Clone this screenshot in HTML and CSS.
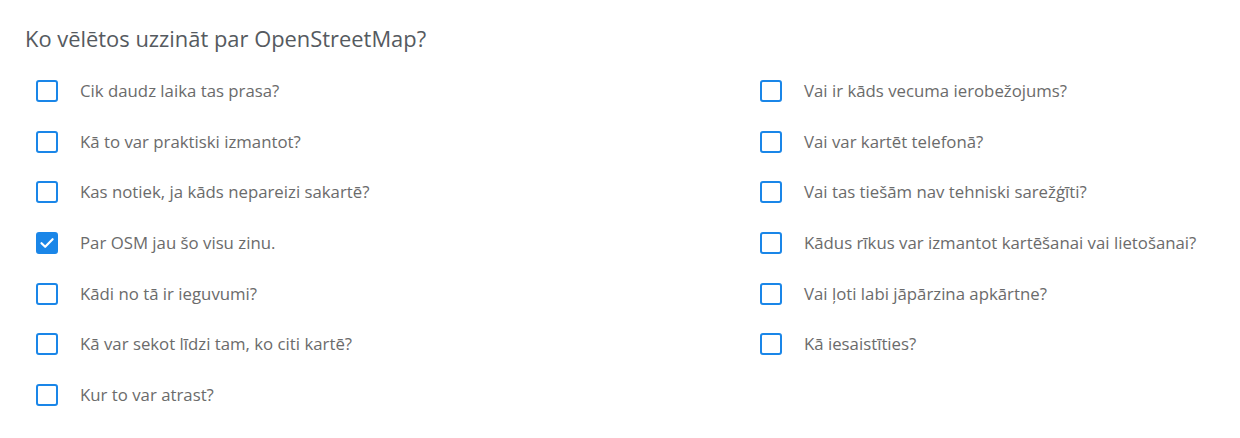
FILE: index.html
```html
<!DOCTYPE html>
<html lang="lv">
<head>
<meta charset="utf-8">
<link rel="stylesheet" href="styles.css">
</head>
<body>
<div class="survey">
  <h2 class="title">Ko vēlētos uzzināt par OpenStreetMap?</h2>
  <div class="options">
    <label class="opt"><span class="box"></span><span class="txt">Cik daudz laika tas prasa?</span></label>
    <label class="opt"><span class="box"></span><span class="txt">Vai ir kāds vecuma ierobežojums?</span></label>
    <label class="opt"><span class="box"></span><span class="txt">Kā to var praktiski izmantot?</span></label>
    <label class="opt"><span class="box"></span><span class="txt">Vai var kartēt telefonā?</span></label>
    <label class="opt"><span class="box"></span><span class="txt">Kas notiek, ja kāds nepareizi sakartē?</span></label>
    <label class="opt"><span class="box"></span><span class="txt">Vai tas tiešām nav tehniski sarežģīti?</span></label>
    <label class="opt"><span class="box checked"><svg viewBox="0 0 22 22" width="22" height="22"><path d="M5.5 11.2 L9.2 14.8 L16.6 7.2" fill="none" stroke="#fff" stroke-width="2.2" stroke-linecap="round" stroke-linejoin="round"/></svg></span><span class="txt">Par OSM jau šo visu zinu.</span></label>
    <label class="opt"><span class="box"></span><span class="txt">Kādus rīkus var izmantot kartēšanai vai lietošanai?</span></label>
    <label class="opt"><span class="box"></span><span class="txt">Kādi no tā ir ieguvumi?</span></label>
    <label class="opt"><span class="box"></span><span class="txt">Vai ļoti labi jāpārzina apkārtne?</span></label>
    <label class="opt"><span class="box"></span><span class="txt">Kā var sekot līdzi tam, ko citi kartē?</span></label>
    <label class="opt"><span class="box"></span><span class="txt">Kā iesaistīties?</span></label>
    <label class="opt"><span class="box"></span><span class="txt">Kur to var atrast?</span></label>
  </div>
</div>
</body>
</html>
```
FILE: styles.css
```css
html, body {
  margin: 0;
  padding: 0;
  background: #fff;
}
body {
  font-family: "Open Sans", "DejaVu Sans", sans-serif;
  color: #6a6a6a;
}
.survey {
  padding: 24px 24px 0 25px;
}
.title {
  margin: 0;
  font-size: 21.9px;
  font-weight: 400;
  color: #555a60;
  line-height: 30px;
}
.options {
  margin-top: 26px;
  margin-left: 11px;
  display: grid;
  grid-template-columns: 724px 1fr;
  grid-auto-rows: 50.7px;
}
.opt {
  display: flex;
  align-items: flex-start;
  gap: 22px;
}
.box {
  width: 22px;
  height: 22px;
  box-sizing: border-box;
  border: 2px solid #1a86e8;
  border-radius: 3px;
  flex: none;
  display: flex;
}
.box.checked {
  background: #1a86e8;
  border-color: #1a86e8;
}
.box.checked svg {
  margin: -2px;
}
.txt {
  font-size: 16.8px;
  line-height: 22px;
  color: #6b6b6b;
}
```
